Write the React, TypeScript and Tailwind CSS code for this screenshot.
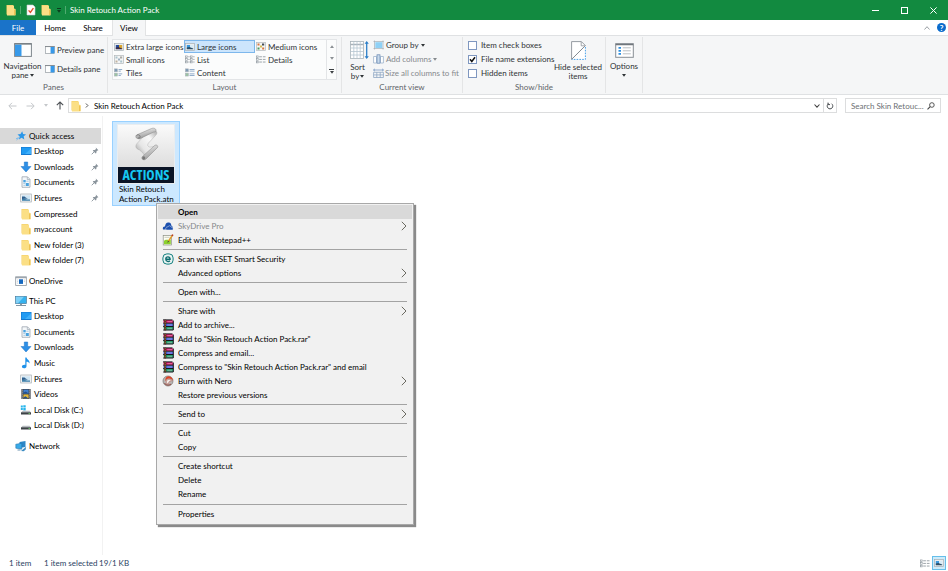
import type { ReactNode } from "react";

type IconProps = { className?: string };

/* ---------- icons ---------- */

const FolderIcon = ({ className = "w-3 h-3" }: IconProps) => (
  <svg viewBox="0 0 12 12" className={`shrink-0 ${className}`}>
    <path d="M1.500 1h6.500v9.500h-6.500z" fill="#f3cd62" />
    <path d="M2 1.500h7v3l1.500.5v6.500h-8.500z" fill="#fbdf85" />
    <path d="M9 5.500h1.500v5.500h-1.500z" fill="#eec354" />
  </svg>
);

const CheckDocIcon = () => (
  <svg viewBox="0 0 12 12" className="w-3 h-3">
    <path d="M2 1h6l2 2v8h-8z" fill="#fff" stroke="#c9cfd4" strokeWidth=".6" />
    <path d="M3.600 6.400l1.800 2 3-4.200" fill="none" stroke="#e0502c" strokeWidth="1.400" />
  </svg>
);

const StarIcon = () => (
  <svg viewBox="0 0 12 12" className="w-3 h-3 shrink-0">
    <path d="M7.200 1.200l.9 2.800 3 .4-2.400 1.900.6 3.300-2.700-1.800-2.700 1.600.8-3-2.200-2 3-.3z" fill="#2c97e8" />
    <path d="M4 7.500l-2.400 2.400M2.800 8l-1.600.6" stroke="#6bb6f0" strokeWidth="1" />
  </svg>
);

const DesktopIcon = () => (
  <svg viewBox="0 0 12 12" className="w-3 h-3 shrink-0">
    <rect x="1" y="2" width="10.500" height="8" fill="#1479d0" />
    <rect x="1.600" y="2.600" width="9.300" height="6.400" fill="#219bf2" />
    <path d="M5 9l6-5.500v5.500z" fill="#3fb0fa" />
  </svg>
);

const DownloadIcon = () => (
  <svg viewBox="0 0 12 12" className="w-3 h-3 shrink-0">
    <path d="M4.300 1h3.400v4.500h3.300l-5 5.500-5-5.500h3.300z" fill="#2d8fe6" stroke="#1c72c4" strokeWidth=".5" />
  </svg>
);

const DocumentIcon = () => (
  <svg viewBox="0 0 12 12" className="w-3 h-3 shrink-0">
    <path d="M2 .8h5.500l2.500 2.500v8h-8z" fill="#f5f8fa" stroke="#8f9ba6" strokeWidth=".7" />
    <path d="M7.300 1v2.500h2.500" fill="none" stroke="#8f9ba6" strokeWidth=".6" />
    <rect x="3.300" y="4" width="2.400" height="2.400" fill="#4aa2de" />
    <path d="M6.300 5.200h2.400M3.300 7.500h2M3.300 9.300h2" stroke="#8ab8d8" strokeWidth=".7" />
    <rect x="5.800" y="7" width="3" height="3" fill="#4aa2de" />
  </svg>
);

const PictureIcon = () => (
  <svg viewBox="0 0 12 12" className="w-3 h-3 shrink-0">
    <rect x=".7" y="2" width="10.600" height="8" fill="#f4f6f7" stroke="#a3abb1" strokeWidth=".7" />
    <rect x="2" y="3.300" width="8" height="5.400" fill="#cfe6f4" />
    <path d="M2 6.800l3 .2 2 .6 3-.2v1.300h-8z" fill="#3f7fa8" />
    <path d="M2 4.600l2.500-.2 1.500 1.400 2 .6-6 .6z" fill="#2e5f8d" />
  </svg>
);

const OneDriveIcon = () => (
  <svg viewBox="0 0 12 12" className="w-3 h-3 shrink-0">
    <rect x=".7" y="1.800" width="10.600" height="8.600" fill="#fff" stroke="#8e979f" strokeWidth=".8" />
    <path d="M.7 2.700h10.600" stroke="#8e979f" strokeWidth="1" />
    <rect x="4" y="4.300" width="4" height="4.600" fill="#1669c0" />
    <path d="M2 5h1.200M2 6.600h1.200M2 8.200h1.200M8.800 5h1.200M8.800 6.600h1.200" stroke="#bcc4ca" strokeWidth=".7" />
  </svg>
);

const ComputerIcon = () => (
  <svg viewBox="0 0 12 12" className="w-3 h-3 shrink-0">
    <rect x=".6" y="1.400" width="10.800" height="7.200" fill="#36b2ee" stroke="#4d7d9c" strokeWidth=".7" />
    <path d="M1 1.800h8l-6 6.400h-2z" fill="#7ed0f7" />
    <path d="M5 8.900h2v1h-2z" fill="#8b9aa5" />
    <path d="M1 10.500h10" stroke="#7f95a5" strokeWidth="1" />
  </svg>
);

const MusicIcon = () => (
  <svg viewBox="0 0 12 12" className="w-3 h-3 shrink-0">
    <path d="M5.300 .6h1.200c.5 2.200 3.600 2.600 3 6-.5-1.400-1.600-1.900-3-1.900v4.500c0 1.300-1.100 2.100-2.500 2.100s-2.100-.8-2.100-1.700 1.200-2 3.400-1.700z" fill="#1f92ea" />
  </svg>
);

const VideoIcon = () => (
  <svg viewBox="0 0 12 12" className="w-3 h-3 shrink-0">
    <rect x="1.400" y="1" width="9.200" height="10" fill="#3a3f47" />
    <rect x="3.400" y="1.600" width="5.200" height="4" fill="#3e7fd0" />
    <rect x="3.400" y="6.400" width="5.200" height="4" fill="#e3b83b" />
    <path d="M3.400 4.500l2.500-1 2.700 2.100h-5.200zM3.400 9.500l2-1.300 3.200 2.200h-5.200z" fill="#27508a" />
    <path d="M2.400 1.600v9M9.600 1.600v9" stroke="#c8ccd2" strokeWidth=".9" strokeDasharray="1 1" />
  </svg>
);

const DiskIcon = ({ windows }: { windows?: boolean }) => (
  <svg viewBox="0 0 12 12" className="w-3 h-3 shrink-0">
    {windows && <path d="M.8 1.600h2v2h-2zM3.300 1.300h2.400v2.300h-2.400zM.8 4.100h2v2h-2zM3.300 4.100h2.400v2.400h-2.400z" fill="#27b5ec" />}
    <path d="M2.600 6.800h7l1.400 1.700h-10z" fill="#b7bcc0" />
    <rect x="1" y="8.300" width="10" height="2.200" fill="#3d4246" />
    <rect x="8.500" y="9" width="1.500" height=".8" fill="#6fd66a" />
  </svg>
);

const NetworkIcon = () => (
  <svg viewBox="0 0 12 12" className="w-3 h-3 shrink-0">
    <path d="M4.500 2l6-1v6l-6 1z" fill="#2d87c8" />
    <path d="M.8 4.200l6-1v6l-6-1z" fill="#39aae8" stroke="#206ca5" strokeWidth=".5" />
    <path d="M6 10.900l5.200-4.200-.6 3-2 1.500z" fill="#3c8cc2" />
    <path d="M2.500 10h3" stroke="#5d89a8" strokeWidth=".9" />
  </svg>
);

const PinIcon = () => (
  <svg viewBox="0 0 8 8" className="w-2 h-2 shrink-0">
    <path d="M4.800 .6l2.600 2.600-.9.200-1.200 1.300.1 1.300-.7.600-2.900-2.900.6-.7 1.300.1 1.300-1.200z" fill="#8a949c" />
    <path d="M3.300 4.700l-2.600 2.600" stroke="#8a949c" strokeWidth=".9" />
  </svg>
);

const PaneIcon = ({ side = "right", className = "w-[10px] h-2" }: IconProps & { side?: "left" | "right" }) => (
  <svg viewBox="0 0 18 14" className={`shrink-0 ${className}`} preserveAspectRatio="none">
    <rect x=".6" y=".6" width="16.800" height="12.800" fill="#fdfefe" stroke="#7d858c" strokeWidth="1" />
    <path d="M.6 1h16.800" stroke="#70777d" strokeWidth="1.200" />
    {side === "left" ? (
      <rect x="1" y="1.700" width="6.500" height="11.300" fill="#3799e9" />
    ) : (
      <rect x="10" y="1.700" width="7" height="11.300" fill="#3799e9" />
    )}
  </svg>
);

const SceneIcon = ({ dark }: { dark?: boolean }) => (
  <svg viewBox="0 0 10 8" className="w-[10px] h-2 shrink-0">
    <rect x=".4" y=".4" width="9.200" height="7.200" fill="#e9eef1" stroke="#a7afb5" strokeWidth=".7" />
    <rect x="1.800" y="2" width="3.200" height="4" fill={dark ? "#274b9a" : "#3c98dc"} />
    <rect x="5" y="2" width="3.200" height="4" fill={dark ? "#d8a52f" : "#d8ecf7"} />
    <path d="M1.800 4.500l2.500-.5 3.900 1.500v.8h-6.400z" fill={dark ? "#3b2f4c" : "#2b4f69"} />
  </svg>
);

const TilesMixIcon = ({ pale }: { pale?: boolean }) => (
  <svg viewBox="0 0 10 9" className="w-[10px] h-[9px] shrink-0">
    <rect x=".4" y=".4" width="9.200" height="8.200" fill="#f4f5f5" stroke="#b3b8bc" strokeWidth=".7" />
    <path d="M1.500 1.500h2v2h-2zM6.200 5.600h2v2h-2z" fill={pale ? "#a9c3cc" : "#d9773e"} />
    <path d="M6 1.500h2.200v2h-2.200z" fill={pale ? "#aaa9a3" : "#414b55"} />
    <path d="M1.500 5.500h2v2h-2z" fill={pale ? "#c0b2a0" : "#4d9a5e"} />
    <path d="M4 3.500h2v2h-2z" fill={pale ? "#9fb1c2" : "#d6bd54"} />
  </svg>
);

const ListIcon = () => (
  <svg viewBox="0 0 11 9" className="w-[10px] h-[9px] shrink-0">
    {[0.6, 3.5, 6.4].map((y) => (
      <g key={y}>
        <rect x=".6" y={y} width="1.900" height="1.800" fill="#fff" stroke="#8d969d" strokeWidth=".7" />
        <path d={`M3.500 ${y + 0.9}h1.700M8.900 ${y + 0.9}h1.700`} stroke="#8d969d" strokeWidth=".8" />
        <rect x="6" y={y} width="1.900" height="1.800" fill="#fff" stroke="#8d969d" strokeWidth=".7" />
      </g>
    ))}
  </svg>
);

const DetailsIcon = () => (
  <svg viewBox="0 0 11 9" className="w-[10px] h-[9px] shrink-0">
    {[0.6, 3.5, 6.4].map((y) => (
      <g key={y}>
        <rect x=".6" y={y} width="1.800" height="1.800" fill="#fff" stroke="#8d969d" strokeWidth=".7" />
        <path d={`M3.500 ${y + 0.9}h3M7.500 ${y + 0.9}h3`} stroke="#7b848b" strokeWidth=".8" />
      </g>
    ))}
  </svg>
);

const ContentIcon = ({ short }: { short?: boolean }) => (
  <svg viewBox="0 0 11 9" className="w-[10px] h-[9px] shrink-0">
    <rect x=".5" y=".5" width="3.200" height="3.200" fill="#7c99b5" stroke="#a7b0b7" strokeWidth=".6" />
    <rect x=".5" y="5.200" width="3.200" height="3.200" fill="#9cc4a2" stroke="#a7b0b7" strokeWidth=".6" />
    <path d={short ? "M5 1.200h4M5 3h2.500M5 6h4M5 7.800h2.500" : "M5 1.200h5.500M5 3h5.500M5 6h5.500M5 7.800h5.500"} stroke="#6c8fb8" strokeWidth=".8" />
  </svg>
);

const SortIcon = () => (
  <svg viewBox="0 0 19 20" className="w-[19px] h-5">
    <rect x=".5" y="1.500" width="13" height="17" fill="#fff" stroke="#a9b2b9" strokeWidth=".8" />
    <path d="M.5 4.500h13" stroke="#a9b2b9" strokeWidth="1.500" />
    <path d="M.5 8h13M.5 11.500h13M.5 15h13M3.800 1.500v17M7 1.500v17M10.200 1.500v17" stroke="#b6c6d2" strokeWidth=".8" />
    <path d="M16.700 2.500v15" stroke="#2d7fc8" strokeWidth="1.300" />
    <path d="M14.600 3.800l2.100-2.800 2.100 2.800zM14.600 16.200l2.100 2.800 2.100-2.800z" fill="#2d7fc8" />
  </svg>
);

const GroupIcon = () => (
  <svg viewBox="0 0 11 10" className="w-[11px] h-[10px] shrink-0">
    <path d="M1.500 .5v9M10 .5v9M.5 1.500h10.300M.5 8.500h10.300" stroke="#a4adb4" strokeWidth=".7" />
    <rect x="2.300" y="2.200" width="7" height="5.800" fill="#8ed0f5" />
  </svg>
);

const ColumnsIcon = () => (
  <svg viewBox="0 0 11 10" className="w-[11px] h-[10px] shrink-0">
    <path d="M.6 2.500h2.900v6.500h-2.900zM7.500 2.500h2.900v6.500h-2.900z" fill="#fff" stroke="#9db2cb" strokeWidth=".8" />
    <rect x="4" y=".8" width="3" height="8.400" fill="#c9daec" stroke="#6587b2" strokeWidth=".7" />
  </svg>
);

const SizeIcon = () => (
  <svg viewBox="0 0 11 10" className="w-[11px] h-[10px] shrink-0">
    <path d="M.5 2h10M2 .8l-1.500 1.200 1.500 1.200M9 .8l1.500 1.200-1.500 1.200" fill="none" stroke="#7a9ac4" strokeWidth=".8" />
    <path d="M.6 4.300h9.800v5.200h-9.800zM3.800 4.300v5.200M7.200 4.300v5.200M.6 6.900h9.800" fill="none" stroke="#8fa7c4" strokeWidth=".8" />
  </svg>
);

const HideIcon = () => (
  <svg viewBox="0 0 15 19" className="w-[15px] h-[19px]">
    <path d="M.6 18.400v-17.800h9.800l4 4z" fill="#fff" stroke="#8a9197" strokeWidth=".9" />
    <path d="M10.200 .8v4h4" fill="none" stroke="#8a9197" strokeWidth=".8" />
    <path d="M.8 18.200l13.500-13.200v13.200z" fill="#fff" />
    <path d="M14.400 6v12.400h-13.600" fill="none" stroke="#48a2ea" strokeWidth="1" strokeDasharray="1.600 1.200" />
    <path d="M.8 18.200l13-13" stroke="#7f868c" strokeWidth=".9" />
  </svg>
);

const OptionsIcon = () => (
  <svg viewBox="0 0 19 15" className="w-[19px] h-[15px]">
    <rect x=".7" y=".7" width="17.600" height="13.600" fill="#fff" stroke="#878e94" strokeWidth="1" />
    <path d="M.7 1.500h17.600" stroke="#70777d" strokeWidth="1.500" />
    <path d="M3.500 4.800h2.500M3.500 7.800h2.500M3.500 10.800h2.500" stroke="#2e8fe0" strokeWidth="1.800" />
    <path d="M7.800 4.800h8M7.800 7.800h8M7.800 10.800h8" stroke="#b2b8bd" strokeWidth=".9" />
  </svg>
);

const CaretIcon = ({ className = "w-1 h-[3px]" }: IconProps) => (
  <svg viewBox="0 0 4 3" className={`shrink-0 ${className}`}>
    <path d="M0 0h4l-2 2.800z" fill="currentColor" />
  </svg>
);

const ChevronIcon = () => (
  <svg viewBox="0 0 6 10" className="w-[6px] h-[10px]">
    <path d="M.8 .8l4.200 4.200-4.200 4.200" fill="none" stroke="#5b5a50" strokeWidth=".9" />
  </svg>
);

const CloudIcon = () => (
  <svg viewBox="0 0 12 12" className="w-3 h-3 -ml-px">
    <path d="M1 9.600c-.6-1.900.4-3.200 2-3 .2-2.900 1.900-4.500 3.800-4 1.900.2 2.500 1.500 2.500 3 1.500.8 1.700 2 1.500 4z" fill="#1b4fae" />
    <path d="M4 10c-.8-1.800.2-3.200 1.700-3 .7-1.700 3-1.700 3.500.1 1.700 0 2.300 1.500 1.700 2.900z" fill="#1b4fae" stroke="#f1f1f1" strokeWidth=".5" />
  </svg>
);

const NotepadIcon = () => (
  <svg viewBox="0 0 12 12" className="w-3 h-3 -ml-px">
    <rect x="1.200" y="1.500" width="8.300" height="9.500" fill="#fdfdf4" stroke="#8b8f83" strokeWidth=".7" />
    <path d="M2 7c2-2.500 4 0 6.800-1.500v4.700h-6.800z" fill="#8cd02e" />
    <path d="M2.500 3.300h5" stroke="#b4b8aa" strokeWidth=".7" />
    <path d="M10.600 1l-4.300 6.400" stroke="#e09a2c" strokeWidth="1.500" />
    <path d="M10.900 .6l-.9 1.300" stroke="#b23a2c" strokeWidth="1.600" />
    <path d="M6.500 7l-.7 1.400" stroke="#333" strokeWidth=".9" />
  </svg>
);

const EsetIcon = () => (
  <svg viewBox="0 0 12 12" className="w-3 h-3 -ml-px">
    <rect x=".9" y=".9" width="10.200" height="10.200" rx="4" fill="#e9f4f3" stroke="#14807f" strokeWidth="1" />
    <path d="M3.900 6.200h4.200c.1-3-4.200-3-4.300-.2 0 2.900 3 3 4.100 1.700" fill="none" stroke="#0f6d70" strokeWidth="1.400" />
  </svg>
);

const RarIcon = () => (
  <svg viewBox="0 0 12 12" className="w-3 h-3 -ml-px">
    <path d="M1.500 1h8.500l1.200 1v2h-9.700z" fill="#d81b68" />
    <path d="M1.500 4.500h9.700v2.800h-9.700z" fill="#3f5fdc" />
    <path d="M1.500 7.800h9.700v3h-9.200z" fill="#14a064" />
    <path d="M1.200 4.200h10M1.200 7.500h10M1.200 11h10M1 .9h9.500M11.300 1.500v9.500" stroke="#14141c" strokeWidth="1" />
    <path d="M5.300 2.700h5M5.300 6h5M5.300 9.300h5" stroke="#f0cfe0" strokeWidth=".5" />
    <path d="M3.200 .7v10.700" stroke="#43231c" strokeWidth="1.900" />
    <path d="M3.200 1.300v10" stroke="#dcae4c" strokeWidth=".8" strokeDasharray="1 1" />
  </svg>
);

const NeroIcon = () => (
  <svg viewBox="0 0 12 12" className="w-3 h-3 -ml-px">
    <circle cx="6" cy="6" r="5" fill="#b9b5b3" stroke="#7b7472" strokeWidth=".7" />
    <path d="M6.500 1.200c3 .2 4.500 2.300 4.300 4.800-.7-1.700-2-2.600-3.600-2.500-2-.2-3.400 1-3.500 3-.9-2.900.4-5 2.800-5.300z" fill="#dd4326" />
    <path d="M4.800 8.700c-1.200-2.200.3-4.700 3-4.300 1 .3 1.500 1.100 1.500 1.800-1.500-.6-2.800.2-2.700 2.600z" fill="#f3efec" stroke="#b4594a" strokeWidth=".5" />
    <path d="M2.500 8c1 2.300 4.500 2.800 6.500 1" fill="none" stroke="#8a3127" strokeWidth=".9" />
  </svg>
);

const ScrollArt = () => (
  <svg viewBox="0 0 56 42" className="w-full h-[42px]">
    <defs>
      <linearGradient id="sheet" x1="0" y1="1" x2="1" y2="0">
        <stop offset="0" stopColor="#8f8f8f" />
        <stop offset=".35" stopColor="#e6e6e6" />
        <stop offset=".7" stopColor="#fafafa" />
        <stop offset="1" stopColor="#a8a8a8" />
      </linearGradient>
      <linearGradient id="roll" x1="0" y1="0" x2=".4" y2="1">
        <stop offset="0" stopColor="#f7f7f7" />
        <stop offset="1" stopColor="#999" />
      </linearGradient>
    </defs>
    {/* sheet runs down-left from the top roll, then right into the lower roll */}
    <path d="M21 14l17-8c1.500 1.500 1 3-.5 4.500l-7 7.500c-1.500 2-1 3.500 1.500 4.200l6.500-1.200-11 11.500c-1.500-3-2.500-5-6-7.500-4-1.500-4.500-4-2.500-6.500l6-6.500z" fill="url(#sheet)" stroke="#a5a5a5" strokeWidth=".4" />
    <path d="M18.500 10l15-6.500c3-1 5 .7 4.500 2.500-.5.800-2 1-3 1.200l-13 6.300c-3 1-5.500-1.500-3.500-3.500z" fill="url(#roll)" stroke="#858585" strokeWidth=".5" />
    <path d="M18.500 10.500c1-1 3-1 3.500.5s-.5 2.500-2 2" fill="none" stroke="#6f6f6f" strokeWidth=".8" />
    <path d="M24.500 31.500l12.500-11.300c1.500-.8 3.500.6 2.500 2.300l-11.500 11.500c-2.500 2-5.500-.4-3.500-2.500z" fill="url(#roll)" stroke="#858585" strokeWidth=".5" />
    <ellipse cx="25.700" cy="33" rx="1.500" ry="1.800" fill="#777" />
  </svg>
);

/* ---------- data ---------- */

type NavItem = { label: string; icon: ReactNode; pinned?: boolean; root?: boolean };

const quickAccess: NavItem[] = [
  { label: "Quick access", icon: <StarIcon />, root: true },
  { label: "Desktop", icon: <DesktopIcon />, pinned: true },
  { label: "Downloads", icon: <DownloadIcon />, pinned: true },
  { label: "Documents", icon: <DocumentIcon />, pinned: true },
  { label: "Pictures", icon: <PictureIcon />, pinned: true },
  { label: "Compressed", icon: <FolderIcon /> },
  { label: "myaccount", icon: <FolderIcon /> },
  { label: "New folder (3)", icon: <FolderIcon /> },
  { label: "New folder (7)", icon: <FolderIcon /> },
];

const thisPc: NavItem[] = [
  { label: "This PC", icon: <ComputerIcon />, root: true },
  { label: "Desktop", icon: <DesktopIcon /> },
  { label: "Documents", icon: <DocumentIcon /> },
  { label: "Downloads", icon: <DownloadIcon /> },
  { label: "Music", icon: <MusicIcon /> },
  { label: "Pictures", icon: <PictureIcon /> },
  { label: "Videos", icon: <VideoIcon /> },
  { label: "Local Disk (C:)", icon: <DiskIcon windows /> },
  { label: "Local Disk (D:)", icon: <DiskIcon /> },
];

const layouts = [
  { label: "Extra large icons", icon: <SceneIcon dark /> },
  { label: "Large icons", icon: <SceneIcon />, active: true },
  { label: "Medium icons", icon: <TilesMixIcon /> },
  { label: "Small icons", icon: <TilesMixIcon pale /> },
  { label: "List", icon: <ListIcon /> },
  { label: "Details", icon: <DetailsIcon /> },
  { label: "Tiles", icon: <ContentIcon short /> },
  { label: "Content", icon: <ContentIcon /> },
];

type MenuEntry = { label: string; icon?: ReactNode; sub?: boolean; bold?: boolean; dim?: boolean };

const menuGroups: MenuEntry[][] = [
  [
    { label: "Open", bold: true },
    { label: "SkyDrive Pro", icon: <CloudIcon />, sub: true, dim: true },
    { label: "Edit with Notepad++", icon: <NotepadIcon /> },
  ],
  [
    { label: "Scan with ESET Smart Security", icon: <EsetIcon /> },
    { label: "Advanced options", sub: true },
  ],
  [{ label: "Open with..." }],
  [
    { label: "Share with", sub: true },
    { label: "Add to archive...", icon: <RarIcon /> },
    { label: 'Add to "Skin Retouch Action Pack.rar"', icon: <RarIcon /> },
    { label: "Compress and email...", icon: <RarIcon /> },
    { label: 'Compress to "Skin Retouch Action Pack.rar" and email', icon: <RarIcon /> },
    { label: "Burn with Nero", icon: <NeroIcon />, sub: true },
    { label: "Restore previous versions" },
  ],
  [{ label: "Send to", sub: true }],
  [{ label: "Cut" }, { label: "Copy" }],
  [{ label: "Create shortcut" }, { label: "Delete" }, { label: "Rename" }],
  [{ label: "Properties" }],
];

/* ---------- parts ---------- */

function TitleBar() {
  return (
    <header className="flex h-5 items-center bg-[#128a40] pl-1 text-white">
      <FolderIcon className="w-[14px] h-3" />
      <span className="ml-[2px] h-2 w-px bg-[#4fab70]" />
      <button aria-label="Properties" className="ml-1"><CheckDocIcon /></button>
      <button aria-label="New folder" className="ml-[2px]"><FolderIcon className="w-[14px] h-3" /></button>
      <button aria-label="Customize toolbar" className="ml-1 flex flex-col items-center gap-px text-[#0b3d1d]">
        <span className="h-px w-1 bg-current" />
        <CaretIcon />
      </button>
      <span className="ml-1 h-2 w-px bg-[#4fab70]" />
      <h1 className="ml-1">Skin Retouch Action Pack</h1>
      <div className="ml-auto flex h-full">
        <button aria-label="Minimize" className="flex w-[30px] items-center justify-center">
          <span className="h-px w-[7px] bg-white" />
        </button>
        <button aria-label="Maximize" className="flex w-[29px] items-center justify-center">
          <span className="h-[7px] w-[7px] border border-white" />
        </button>
        <button aria-label="Close" className="flex w-[29px] items-center justify-center">
          <svg viewBox="0 0 7 7" className="w-[7px] h-[7px]"><path d="M.4 .4l6.200 6.200M6.600 .4l-6.200 6.200" stroke="#fff" strokeWidth="1" /></svg>
        </button>
      </div>
    </header>
  );
}

function Tabs() {
  return (
    <nav className="relative z-10 flex h-[15px] items-stretch">
      <button className="w-9 bg-[#1a73c9] text-white">File</button>
      <button className="w-[38px]">Home</button>
      <button className="w-[38px]">Share</button>
      <button className="-mb-px w-[34px] border-x border-[#e2e3e4] bg-[#f5f6f7]">View</button>
      <div className="ml-auto flex items-center gap-[7px] pr-[2px]">
        <button aria-label="Collapse ribbon">
          <svg viewBox="0 0 6 4" className="w-[6px] h-1"><path d="M.5 3.500l2.500-2.800 2.500 2.800" fill="none" stroke="#8d9399" strokeWidth=".9" /></svg>
        </button>
        <button aria-label="Help" className="flex h-[9px] w-[9px] items-center justify-center rounded-full bg-[#0b6ccd] font-bold text-white">?</button>
      </div>
    </nav>
  );
}

function RibbonGroup({ label, className, children }: { label: string; className: string; children?: ReactNode }) {
  return (
    <section className={`flex shrink-0 flex-col border-r border-[#e4e5e6] ${className}`}>
      <div className="h-[45px]">{children}</div>
      <h2 className="text-center leading-3 text-[#5f6469]">{label}</h2>
    </section>
  );
}

function Check({ label, checked }: { label: string; checked?: boolean }) {
  return (
    <label className="relative flex h-[14px] items-center gap-1">
      <input type="checkbox" defaultChecked={checked} className="peer h-[9px] w-[9px] shrink-0 appearance-none border border-[#7f97c0] bg-white" />
      <svg viewBox="0 0 9 9" className="pointer-events-none absolute left-0 hidden h-[9px] w-[9px] peer-checked:block">
        <path d="M2 4.300l1.800 2.200 3.200-4.300" fill="none" stroke="#111" strokeWidth="1.500" />
      </svg>
      {label}
    </label>
  );
}

function Ribbon() {
  return (
    <div className="flex h-[60px] border-y border-[#dfe1e3] bg-[#f5f6f7] py-px text-[#2f3336]">
      <RibbonGroup label="Panes" className="w-[108px]">
        <div className="flex pt-[6px]">
          <button className="flex w-[45px] flex-col items-center leading-[9px]">
            <PaneIcon side="left" className="mb-[5px] h-[14px] w-[18px]" />
            Navigation
            <span className="flex items-center gap-px">pane <CaretIcon /></span>
          </button>
          <div className="flex flex-col gap-2 pt-px">
            <button className="flex h-[11px] items-center gap-[2px] whitespace-nowrap"><PaneIcon />Preview pane</button>
            <button className="flex h-[11px] items-center gap-[2px] whitespace-nowrap"><PaneIcon />Details pane</button>
          </div>
        </div>
      </RibbonGroup>

      <RibbonGroup label="Layout" className="w-[234px] px-1">
        <div className="mt-[2px] flex border border-[#e3e5e7] bg-[#fbfcfc]">
          <div className="grid flex-1 grid-cols-3">
            {layouts.map((l) => (
              <button
                key={l.label}
                className={`flex h-[13px] items-center gap-[2px] whitespace-nowrap border ${
                  l.active ? "border-[#7db7ec] bg-[#cce5fc]" : "border-transparent"
                }`}
              >
                {l.icon}
                {l.label}
              </button>
            ))}
          </div>
          <div className="flex w-[10px] flex-col items-center justify-around border-l border-[#e3e5e7] text-[#8b9095]">
            <button aria-label="Scroll up"><CaretIcon className="w-1 h-[3px] rotate-180" /></button>
            <button aria-label="Scroll down"><CaretIcon /></button>
            <button aria-label="More layouts" className="flex flex-col items-center gap-px text-[#3c4043]">
              <span className="h-px w-[5px] bg-current" />
              <CaretIcon />
            </button>
          </div>
        </div>
      </RibbonGroup>

      <RibbonGroup label="Current view" className="w-[121px]">
        <div className="flex pt-px">
          <button className="flex w-[31px] flex-col items-center pt-[2px] leading-[9px]">
            <span className="mb-[3px] ml-1"><SortIcon /></span>
            Sort
            <span className="flex items-center gap-px">by <CaretIcon /></span>
          </button>
          <div className="flex flex-col">
            <button className="flex h-[14px] items-center gap-[2px] whitespace-nowrap"><GroupIcon />Group by <CaretIcon /></button>
            <button className="flex h-[14px] items-center gap-[2px] whitespace-nowrap text-[#85898d]"><ColumnsIcon />Add columns <CaretIcon /></button>
            <button className="flex h-[14px] items-center gap-px whitespace-nowrap text-[#85898d]"><SizeIcon />Size all columns to fit</button>
          </div>
        </div>
      </RibbonGroup>

      <RibbonGroup label="Show/hide" className="w-[143px]">
        <div className="flex pt-px pl-[5px]">
          <div className="flex w-[85px] flex-col whitespace-nowrap">
            <Check label="Item check boxes" />
            <Check label="File name extensions" checked />
            <Check label="Hidden items" />
          </div>
          <button className="flex w-[50px] flex-col items-center whitespace-nowrap pt-[3px] leading-[9px]">
            <span className="mb-[3px]"><HideIcon /></span>
            Hide selected
            <span>items</span>
          </button>
        </div>
      </RibbonGroup>

      <RibbonGroup label="" className="w-[37px]">
        <button className="flex w-full flex-col items-center pt-[6px] leading-[9px]">
          <span className="mb-1"><OptionsIcon /></span>
          Options
          <CaretIcon className="mt-[3px] w-1 h-[3px]" />
        </button>
      </RibbonGroup>
    </div>
  );
}

function AddressBar() {
  return (
    <div className="flex h-[21px] items-center pl-2 pr-[7px]">
      <button aria-label="Back" className="w-[18px] text-[#c4c7ca]">
        <svg viewBox="0 0 9 8" className="w-[9px] h-2"><path d="M4 .8l-3.200 3.200 3.200 3.200M1 4h7.500" fill="none" stroke="currentColor" strokeWidth="1" /></svg>
      </button>
      <button aria-label="Forward" className="w-[18px] text-[#c4c7ca]">
        <svg viewBox="0 0 9 8" className="w-[9px] h-2"><path d="M5 .8l3.200 3.200-3.200 3.200M8 4h-7.500" fill="none" stroke="currentColor" strokeWidth="1" /></svg>
      </button>
      <button aria-label="Recent locations" className="w-3 text-[#c4c7ca]"><CaretIcon /></button>
      <button aria-label="Up" className="w-3 text-[#4d5155]">
        <svg viewBox="0 0 8 9" className="w-2 h-[9px]"><path d="M.8 4.200l3.200-3.200 3.200 3.200M4 1.200v7.300" fill="none" stroke="currentColor" strokeWidth="1.100" /></svg>
      </button>
      <div className="flex h-[15px] flex-1 items-center border border-[#dcddde] bg-white pl-px">
        <FolderIcon />
        <svg viewBox="0 0 4 6" className="ml-[3px] mr-[5px] w-1 h-[5px]"><path d="M.7 .6l2.400 2.400-2.400 2.400" fill="none" stroke="#333" strokeWidth="1" /></svg>
        <button>Skin Retouch Action Pack</button>
        <button aria-label="Previous locations" className="ml-auto mr-[3px]">
          <svg viewBox="0 0 6 4" className="w-[6px] h-1"><path d="M.5 .5l2.500 2.700 2.500-2.700" fill="none" stroke="#444" strokeWidth="1.100" /></svg>
        </button>
        <button aria-label="Refresh" className="flex h-full w-[13px] items-center justify-center border-l border-[#dcddde]">
          <svg viewBox="0 0 8 8" className="w-2 h-2"><path d="M5.500 1.700a2.800 2.800 0 1 1-3 0M2 .6v2h2" fill="none" stroke="#4a4e52" strokeWidth="1" /></svg>
        </button>
      </div>
      <label className="ml-2 flex h-[15px] w-24 items-center border border-[#dcddde] bg-white pl-[5px] pr-[5px]">
        <input type="text" aria-label="Search" placeholder="Search Skin Retouc..." className="w-full min-w-0 outline-none placeholder:text-[#6c7074]" />
        <svg viewBox="0 0 8 8" className="w-2 h-2 shrink-0"><circle cx="4.900" cy="3" r="2.300" fill="none" stroke="#444" strokeWidth=".9" /><path d="M3.200 4.700l-2.700 2.700" stroke="#444" strokeWidth="1.100" /></svg>
      </label>
    </div>
  );
}

function NavRow({ item, active }: { item: NavItem; active?: boolean }) {
  return (
    <li className="min-h-0 flex-1">
      <a href="#" className={`flex h-full items-center gap-[2px] pr-[2px] ${item.root ? "pl-[15px]" : "pl-5"} ${active ? "bg-[#d9d9d9]" : ""}`}>
        {item.icon}
        <span className="flex-1 whitespace-nowrap">{item.label}</span>
        {item.pinned && <PinIcon />}
      </a>
    </li>
  );
}

function Sidebar() {
  return (
    <aside className="flex w-[103px] shrink-0 flex-col gap-[5px] border-r border-[#f2f2f2] pr-px pt-3">
      <ul className="flex h-[140px] flex-col">
        {quickAccess.map((item, i) => <NavRow key={item.label} item={item} active={i === 0} />)}
      </ul>
      <ul className="flex h-[15px] flex-col">
        <NavRow item={{ label: "OneDrive", icon: <OneDriveIcon />, root: true }} />
      </ul>
      <ul className="flex h-[140px] flex-col">
        {thisPc.map((item) => <NavRow key={item.label} item={item} />)}
      </ul>
      <ul className="flex h-[15px] flex-col">
        <NavRow item={{ label: "Network", icon: <NetworkIcon />, root: true }} />
      </ul>
    </aside>
  );
}

function FileTile() {
  return (
    <button className="ml-[9px] mt-[5px] flex h-[85px] w-[68px] flex-col border border-[#99d1ff] bg-[#cce8ff] px-1 pt-[2px] text-left">
      <div className="w-full border border-[#e9edf0] bg-linear-to-b from-[#fafafa] to-[#d3d3d3]">
        <ScrollArt />
        <div className="h-4 bg-[#0a1426] text-center font-['Open_Sans','Noto_Sans',sans-serif] text-[14px] leading-4 font-bold text-[#16c8f2] [font-stretch:condensed]">
          ACTIONS
        </div>
      </div>
      <span className="whitespace-nowrap px-[2px] leading-[10px]">Skin Retouch<br />Action Pack.atn</span>
    </button>
  );
}

function ContextMenu() {
  return (
    <div role="menu" className="absolute left-[53px] top-[87px] w-[258px] border border-[#a8a8a8] bg-[#f1f1f1] p-px pb-[3px] shadow-[2px_2px_1px_#8a8a8a]">
      {menuGroups.map((group, g) => (
        <div key={g} className="last:pt-px">
          {g > 0 && <hr className="mx-[5px] my-[2px] border-t border-[#a3a3a3]" />}
          {group.map((m) => (
            <button
              key={m.label}
              role="menuitem"
              className={`flex h-[14px] w-full items-center whitespace-nowrap pl-[5px] pr-[5px] text-left ${
                m.bold ? "bg-[#d9d9d9] font-bold" : ""
              } ${m.dim ? "text-[#85888b]" : ""}`}
            >
              <span className="w-[15px]">{m.icon}</span>
              <span className="flex-1">{m.label}</span>
              {m.sub && <ChevronIcon />}
            </button>
          ))}
        </div>
      ))}
    </div>
  );
}

function StatusBar() {
  return (
    <footer className="flex h-4 items-center pl-[9px] pr-[2px] text-[#2b3f63]">
      <span className="w-[35px]">1 item</span>
      <span className="w-[55px] whitespace-nowrap">1 item selected</span>
      <span>19/1 KB</span>
      <div className="ml-auto flex items-center gap-[2px]">
        <button aria-label="Details view"><DetailsIcon /></button>
        <button aria-label="Large icons view" className="flex h-[14px] w-[14px] items-center justify-center border border-[#66bfea] bg-[#cdebfa]"><SceneIcon /></button>
      </div>
    </footer>
  );
}

export default function App() {
  return (
    <div className="flex min-h-screen flex-col bg-white font-[Lato,'Open_Sans',sans-serif] text-[8px] leading-[10px] text-black">
      <TitleBar />
      <Tabs />
      <Ribbon />
      <AddressBar />
      <div className="flex flex-1">
        <Sidebar />
        <main className="relative flex-1">
          <FileTile />
          <ContextMenu />
        </main>
      </div>
      <StatusBar />
    </div>
  );
}
